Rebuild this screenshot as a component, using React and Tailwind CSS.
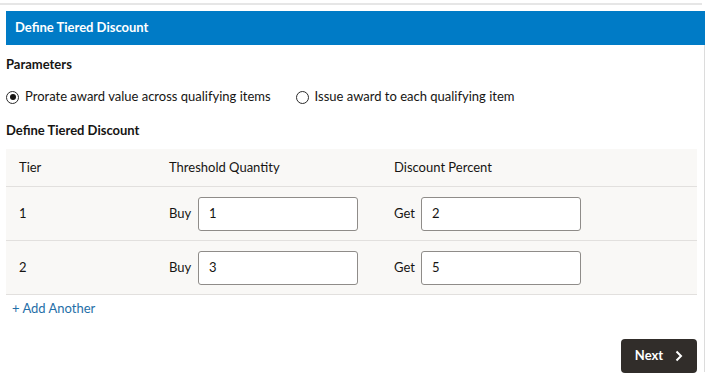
import React from 'react';

const tiers = [
  { tier: '1', buy: '1', get: '2' },
  { tier: '2', buy: '3', get: '5' },
];

// Radio indicator, filled when checked
const Radio = ({ checked }) => (
  <span className="w-[13px] h-[13px] rounded-full border border-[#2b2b2b] flex items-center justify-center bg-white">
    {checked && <span className="w-[6px] h-[6px] rounded-full bg-[#161513]"></span>}
  </span>
);

const TierRow = ({ row }) => (
  <div className="grid grid-cols-[163px_225px_1fr] items-center h-[54px] border-b border-[#e2e0de]">
    <div className="pl-[13px]">{row.tier}</div>
    <div className="flex items-center">
      <span className="w-[29px]">Buy</span>
      <div className="w-[160px] h-[34px] border border-[#8f8c89] rounded-[3px] bg-white flex items-center pl-[10px]">{row.buy}</div>
    </div>
    <div className="flex items-center">
      <span className="w-[27px]">Get</span>
      <div className="w-[160px] h-[34px] border border-[#8f8c89] rounded-[3px] bg-white flex items-center pl-[10px]">{row.get}</div>
    </div>
  </div>
);

export default function App() {
  return (
    <div className="w-[705px] h-[385px] bg-white text-[13px] text-[#161513] overflow-hidden" style={{ fontFamily: 'Lato, "Noto Sans", sans-serif' }}>
      <div className="pt-[3px] pr-[3px]">
        <div className="h-[2px] bg-[#e6e6e6]"></div>
      </div>
      <div className="pl-[6px] pt-[6px]">
        <div className="h-[34px] bg-[#007bc6] flex items-center pl-[9px] text-white font-bold">Define Tiered Discount</div>
        <div className="border-r border-[#dcdcdc] h-[327px] pr-[7px] flex flex-col">
          <div className="font-bold mt-[11px] leading-[16px]">Parameters</div>
          <div className="flex items-center mt-[17px] h-[16px]">
            <Radio checked />
            <span className="ml-[6px]">Prorate award value across qualifying items</span>
            <span className="ml-[25px]"><Radio /></span>
            <span className="ml-[6px]">Issue award to each qualifying item</span>
          </div>
          <div className="font-bold mt-[17px] leading-[16px]">Define Tiered Discount</div>
          <div className="mt-[11px] bg-[#f9f8f6]">
            <div className="grid grid-cols-[163px_225px_1fr] items-center h-[38px] border-b border-[#e2e0de]">
              <div className="pl-[13px]">Tier</div>
              <div>Threshold Quantity</div>
              <div>Discount Percent</div>
            </div>
            {tiers.map((row) => (
              <TierRow key={row.tier} row={row} />
            ))}
          </div>
          <div className="mt-[4px] pl-[6px] text-[#1f6fa8]">+ Add Another</div>
          <div className="flex justify-end mt-[20px]">
            <button className="w-[76px] h-[34px] rounded-[4px] bg-[#312d2a] text-white font-bold flex items-center justify-center gap-[12px]">
              Next
              <svg width="8" height="12" viewBox="0 0 8 12" fill="none">
                <path d="M1.5 1.5 6 6l-4.5 4.5" stroke="white" strokeWidth="2" />
              </svg>
            </button>
          </div>
        </div>
      </div>
    </div>
  );
}
